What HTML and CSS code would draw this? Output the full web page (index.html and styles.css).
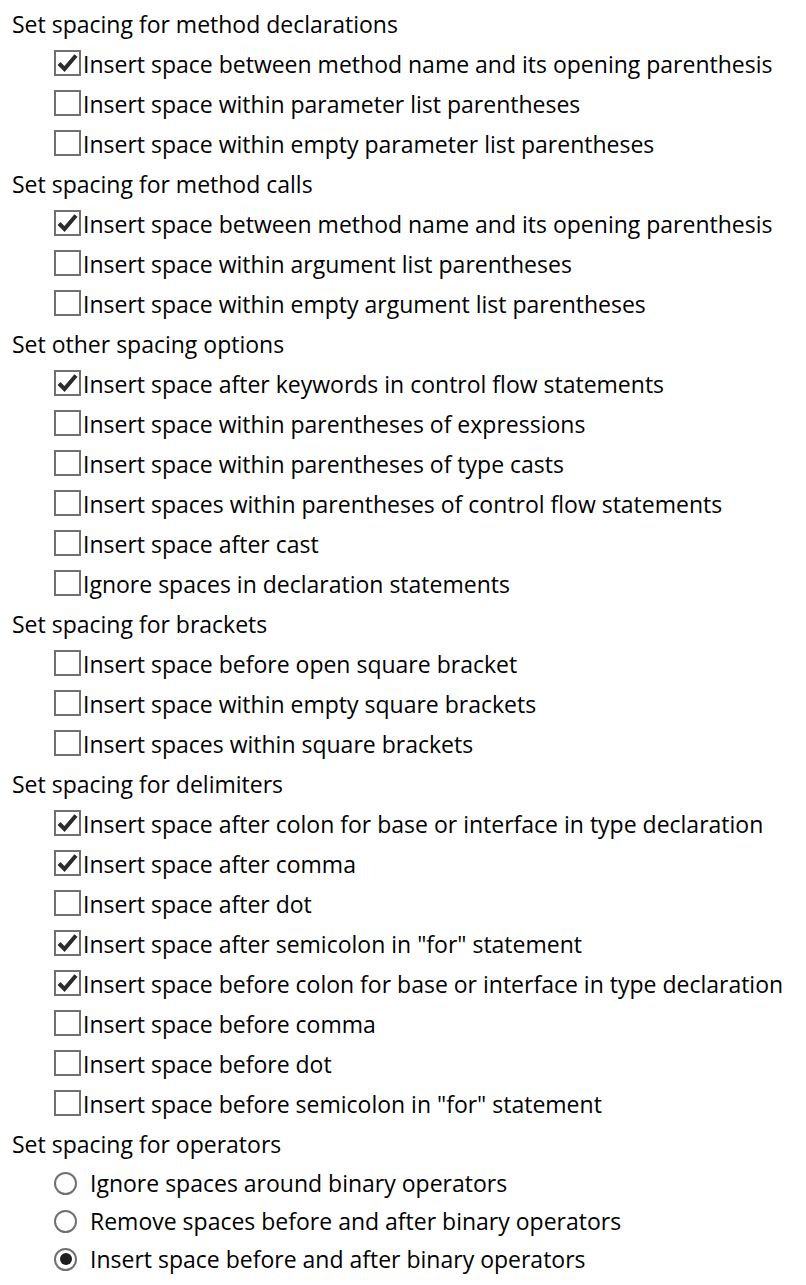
FILE: index.html
```html
<!DOCTYPE html>
<html>
<head>
<meta charset="utf-8">
<link rel="stylesheet" href="styles.css">
</head>
<body>
<div class="page">
  <div class="heading">Set spacing for method declarations</div>
  <label class="row"><span class="box checked"><svg viewBox="0 0 23 22"><path d="M3 11.5 L8.5 17 L20 3.5"/></svg></span><span class="txt">Insert space between method name and its opening parenthesis</span></label>
  <label class="row"><span class="box"></span><span class="txt">Insert space within parameter list parentheses</span></label>
  <label class="row"><span class="box"></span><span class="txt">Insert space within empty parameter list parentheses</span></label>

  <div class="heading">Set spacing for method calls</div>
  <label class="row"><span class="box checked"><svg viewBox="0 0 23 22"><path d="M3 11.5 L8.5 17 L20 3.5"/></svg></span><span class="txt">Insert space between method name and its opening parenthesis</span></label>
  <label class="row"><span class="box"></span><span class="txt">Insert space within argument list parentheses</span></label>
  <label class="row"><span class="box"></span><span class="txt">Insert space within empty argument list parentheses</span></label>

  <div class="heading">Set other spacing options</div>
  <label class="row"><span class="box checked"><svg viewBox="0 0 23 22"><path d="M3 11.5 L8.5 17 L20 3.5"/></svg></span><span class="txt">Insert space after keywords in control flow statements</span></label>
  <label class="row"><span class="box"></span><span class="txt">Insert space within parentheses of expressions</span></label>
  <label class="row"><span class="box"></span><span class="txt">Insert space within parentheses of type casts</span></label>
  <label class="row"><span class="box"></span><span class="txt">Insert spaces within parentheses of control flow statements</span></label>
  <label class="row"><span class="box"></span><span class="txt">Insert space after cast</span></label>
  <label class="row"><span class="box"></span><span class="txt">Ignore spaces in declaration statements</span></label>

  <div class="heading">Set spacing for brackets</div>
  <label class="row"><span class="box"></span><span class="txt">Insert space before open square bracket</span></label>
  <label class="row"><span class="box"></span><span class="txt">Insert space within empty square brackets</span></label>
  <label class="row"><span class="box"></span><span class="txt">Insert spaces within square brackets</span></label>

  <div class="heading">Set spacing for delimiters</div>
  <label class="row"><span class="box checked"><svg viewBox="0 0 23 22"><path d="M3 11.5 L8.5 17 L20 3.5"/></svg></span><span class="txt">Insert space after colon for base or interface in type declaration</span></label>
  <label class="row"><span class="box checked"><svg viewBox="0 0 23 22"><path d="M3 11.5 L8.5 17 L20 3.5"/></svg></span><span class="txt">Insert space after comma</span></label>
  <label class="row"><span class="box"></span><span class="txt">Insert space after dot</span></label>
  <label class="row"><span class="box checked"><svg viewBox="0 0 23 22"><path d="M3 11.5 L8.5 17 L20 3.5"/></svg></span><span class="txt">Insert space after semicolon in "for" statement</span></label>
  <label class="row"><span class="box checked"><svg viewBox="0 0 23 22"><path d="M3 11.5 L8.5 17 L20 3.5"/></svg></span><span class="txt">Insert space before colon for base or interface in type declaration</span></label>
  <label class="row"><span class="box"></span><span class="txt">Insert space before comma</span></label>
  <label class="row"><span class="box"></span><span class="txt">Insert space before dot</span></label>
  <label class="row"><span class="box"></span><span class="txt">Insert space before semicolon in "for" statement</span></label>

  <div class="heading">Set spacing for operators</div>
  <label class="rrow"><span class="radio"></span><span class="txt">Ignore spaces around binary operators</span></label>
  <label class="rrow"><span class="radio"></span><span class="txt">Remove spaces before and after binary operators</span></label>
  <label class="rrow"><span class="radio on"></span><span class="txt">Insert space before and after binary operators</span></label>
</div>
</body>
</html>
```

FILE: styles.css
```css
html, body {
  margin: 0;
  padding: 0;
  background: #ffffff;
}
body {
  font-family: "Open Sans", "Noto Sans", sans-serif;
  font-size: 23px;
  color: #000000;
}
.page {
  padding: 4px 0 0 12px;
  display: flex;
  flex-direction: column;
}
.heading {
  height: 40px;
  line-height: 40px;
  white-space: nowrap;
}
.row {
  height: 40px;
  display: flex;
  align-items: center;
  padding-left: 42px;
  white-space: nowrap;
}
.rrow {
  height: 38px;
  display: flex;
  align-items: center;
  padding-left: 42px;
  white-space: nowrap;
}
.box {
  box-sizing: border-box;
  width: 27px;
  height: 26px;
  border: 2px solid #707070;
  background: #fff;
  flex: none;
  display: block;
  margin-right: 2px;
  margin-top: -2px;
}
.box svg {
  display: block;
  width: 23px;
  height: 22px;
}
.box svg path {
  fill: none;
  stroke: #2b2b2b;
  stroke-width: 4;
  stroke-linecap: butt;
  stroke-linejoin: miter;
}
.radio {
  box-sizing: border-box;
  width: 23px;
  height: 23px;
  border-radius: 50%;
  border: 2px solid #707070;
  flex: none;
  margin-right: 13px;
  display: flex;
  align-items: center;
  justify-content: center;
}
.radio.on::after {
  content: "";
  width: 12px;
  height: 12px;
  border-radius: 50%;
  background: #1e1e1e;
}
```
